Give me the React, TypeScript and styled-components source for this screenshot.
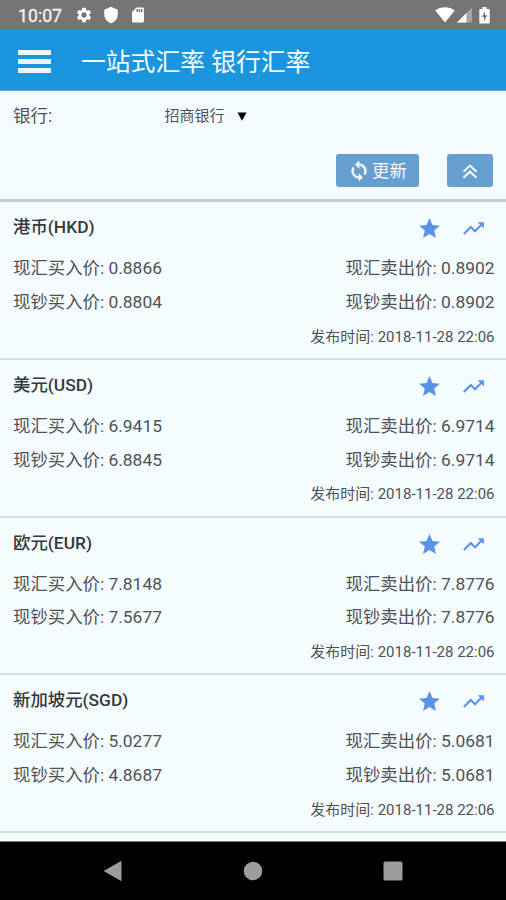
import React from 'react';
import styled, { createGlobalStyle } from 'styled-components';
import { MdSettings, MdShield, MdSdCard, MdStar, MdTrendingUp } from 'react-icons/md';

const GlobalStyle = createGlobalStyle`
  * { box-sizing: border-box; }
  body {
    margin: 0;
    background: #f5fcff;
    font-family: Roboto, "Noto Sans CJK SC", sans-serif;
    overflow: hidden;
  }
`;

const Screen = styled.div`
  width: 506px;
  height: 900px;
  display: flex;
  flex-direction: column;
  background: #f5fcff;
  color: #4e5254;
`;

const StatusBar = styled.header`
  flex: none;
  height: 30px;
  display: flex;
  align-items: center;
  justify-content: space-between;
  padding: 0 16px 0 18px;
  background: #757575;
  color: #fff;
`;

const StatusGroup = styled.div<{ $gap: number }>`
  display: flex;
  align-items: center;
  gap: ${(p) => p.$gap}px;
  svg { display: block; }
`;

const BatterySlot = styled.div`
  padding-left: 5px;
`;

const Clock = styled.span`
  width: 48px;
  font-size: 17.7px;
  line-height: 30px;
  padding-top: 2px;
  color: #f4f4f4;
  -webkit-text-stroke: 0.3px #f4f4f4;
`;

const AppBar = styled.div`
  flex: none;
  height: 61px;
  display: flex;
  align-items: center;
  gap: 29px;
  padding: 0 18px;
  background: #1b95de;
  border-bottom: 1px solid #5ba6de;
  color: #f5fcff;
`;

const MenuButton = styled.button`
  width: 34px;
  height: 23px;
  margin-top: 2px;
  padding: 0;
  border: 0;
  background: none;
  display: flex;
  flex-direction: column;
  justify-content: space-between;
`;

const MenuLine = styled.span`
  width: 33px;
  height: 5px;
  background: #ebf6fd;
`;

const Title = styled.h1`
  margin: 0;
  padding-top: 5px;
  font-size: 24.8px;
  line-height: 36px;
  font-weight: 400;
  white-space: nowrap;
`;

const Filters = styled.section`
  flex: none;
  height: 111px;
  padding: 10px 13px 0;
  border-bottom: 3px solid #c7cdcf;
`;

const BankRow = styled.div`
  display: flex;
  align-items: center;
  height: 29px;
`;

const BankLabel = styled.label`
  width: 151.5px;
  font-size: 17.5px;
  line-height: 28px;
`;

const BankSelect = styled.div`
  display: flex;
  align-items: center;
  gap: 12.5px;
  font-size: 15px;
  line-height: 28px;
  svg { display: block; margin-top: 2px; }
`;

const ButtonRow = styled.div`
  display: flex;
  justify-content: flex-end;
  gap: 28px;
  margin-top: 24px;
`;

const ActionButton = styled.button<{ $width: number }>`
  width: ${(p) => p.$width}px;
  height: 33px;
  display: flex;
  align-items: center;
  justify-content: center;
  gap: 2px;
  padding: 1px 0 0;
  border: 0;
  border-radius: 3px;
  background: #689fd1;
  color: #f5fcff;
  font: 400 17.4px/32px Roboto, "Noto Sans CJK SC", sans-serif;
`;

const RateList = styled.main`
  flex: 1;
  min-height: 0;
  overflow: hidden;
`;

const RateCard = styled.article`
  height: 157.8px;
  padding: 8px 11.5px 0 13px;
  border-bottom: 2px solid #d8dfe2;
`;

const CardHeader = styled.div`
  height: 42px;
  padding-right: 8.5px;
  display: flex;
  justify-content: space-between;
`;

const Currency = styled.h2`
  margin: 0;
  font-size: 17.4px;
  line-height: 34px;
  font-weight: 500;
  color: #35393b;
`;

const CardActions = styled.div`
  display: flex;
  gap: 19px;
  height: 37px;
  align-items: center;
  color: #5a91e9;
  svg { display: block; }
`;

const PriceRow = styled.div`
  display: flex;
  justify-content: space-between;
  font-size: 17.4px;
  line-height: 33.8px;
`;

const Published = styled.div`
  text-align: right;
  font-size: 15px;
  line-height: 34.5px;
`;

const NavBar = styled.nav`
  flex: none;
  height: 59px;
  border-top: 1px solid #777;
  display: grid;
  grid-template-columns: repeat(3, 140px);
  justify-content: center;
  align-items: center;
  justify-items: center;
  background: #000;
  svg { display: block; }
`;

const rates = [
  { name: '港币(HKD)', buy: '0.8866', cashBuy: '0.8804', sell: '0.8902' },
  { name: '美元(USD)', buy: '6.9415', cashBuy: '6.8845', sell: '6.9714' },
  { name: '欧元(EUR)', buy: '7.8148', cashBuy: '7.5677', sell: '7.8776' },
  { name: '新加坡元(SGD)', buy: '5.0277', cashBuy: '4.8687', sell: '5.0681' },
];

const WifiIcon = () => (
  <svg width="20" height="16" viewBox="0 0 20 16" fill="#fff">
    <path d="M0.3 3.4C6 -0.8 14 -0.8 19.7 3.4L10 15.4Z" />
  </svg>
);

const SignalIcon = () => (
  <svg width="15" height="16" viewBox="0 0 15 16">
    <path d="M0 15.5L15 0.5V15.5Z" fill="#a5a5a5" />
    <path d="M0 15.5L9.5 6V15.5Z" fill="#fff" />
  </svg>
);

const BatteryIcon = () => (
  <svg width="11" height="17" viewBox="0 0 11 18">
    <path d="M3.3 0H7.7V2H10.2Q11 2 11 2.8V16.8Q11 17.6 10.2 17.6H0.8Q0 17.6 0 16.8V2.8Q0 2 0.8 2H3.3Z" fill="#fff" />
    <path d="M6 4.5L2.8 10.5H5V15L8.3 8.8H6Z" fill="#757575" />
  </svg>
);

const SyncIcon = () => (
  <svg width="22" height="22" viewBox="0 0 24 24" fill="currentColor" stroke="currentColor" strokeWidth="0.6">
    <path d="M12 4V1L8 5l4 4V6c3.31 0 6 2.69 6 6 0 1.01-.25 1.97-.7 2.8l1.46 1.46C19.54 15.03 20 13.57 20 12c0-4.42-3.58-8-8-8zm0 14c-3.31 0-6-2.69-6-6 0-1.01.25-1.97.7-2.8L5.24 7.74C4.46 8.97 4 10.43 4 12c0 4.42 3.58 8 8 8v3l4-4-4-4v3z" />
  </svg>
);

export default function App() {
  return (
    <>
      <GlobalStyle />
      <Screen>
        <StatusBar>
          <StatusGroup $gap={9}>
            <Clock>10:07</Clock>
            <MdSettings size={18} />
            <MdShield size={18} />
            <MdSdCard size={18} />
          </StatusGroup>
          <StatusGroup $gap={2}>
            <WifiIcon />
            <SignalIcon />
            <BatterySlot>
              <BatteryIcon />
            </BatterySlot>
          </StatusGroup>
        </StatusBar>
        <AppBar>
          <MenuButton aria-label="菜单">
            <MenuLine />
            <MenuLine />
            <MenuLine />
          </MenuButton>
          <Title>一站式汇率 银行汇率</Title>
        </AppBar>
        <Filters>
          <BankRow>
            <BankLabel>银行:</BankLabel>
            <BankSelect>
              招商银行
              <svg width="10" height="9" viewBox="0 0 10 9">
                <path d="M0.5 0.5H9.5L5 8.7Z" fill="#000" />
              </svg>
            </BankSelect>
          </BankRow>
          <ButtonRow>
            <ActionButton $width={83}>
              <SyncIcon />
              更新
            </ActionButton>
            <ActionButton $width={46} aria-label="收起">
              <svg width="16" height="15" viewBox="0 0 16 15" fill="none" stroke="currentColor" strokeWidth="2">
                <path d="M1.5 7.7L8 1.6L14.5 7.7M1.5 13.8L8 7.7L14.5 13.8" />
              </svg>
            </ActionButton>
          </ButtonRow>
        </Filters>
        <RateList>
          {rates.map((rate) => (
            <RateCard key={rate.name}>
              <CardHeader>
                <Currency>{rate.name}</Currency>
                <CardActions>
                  <MdStar size={25} />
                  <MdTrendingUp size={25} />
                </CardActions>
              </CardHeader>
              <PriceRow>
                <span>现汇买入价: {rate.buy}</span>
                <span>现汇卖出价: {rate.sell}</span>
              </PriceRow>
              <PriceRow>
                <span>现钞买入价: {rate.cashBuy}</span>
                <span>现钞卖出价: {rate.sell}</span>
              </PriceRow>
              <Published>发布时间: 2018-11-28 22:06</Published>
            </RateCard>
          ))}
        </RateList>
        <NavBar>
          <svg width="20" height="22" viewBox="0 0 20 22">
            <path d="M0.5 11L18.5 0.8V21.2Z" fill="#9c9c9c" />
          </svg>
          <svg width="20" height="20" viewBox="0 0 20 20">
            <circle cx="10" cy="10" r="9.3" fill="#9c9c9c" />
          </svg>
          <svg width="20" height="20" viewBox="0 0 20 20">
            <rect x="0.5" y="0.5" width="19" height="19" rx="1.5" fill="#9c9c9c" />
          </svg>
        </NavBar>
      </Screen>
    </>
  );
}
